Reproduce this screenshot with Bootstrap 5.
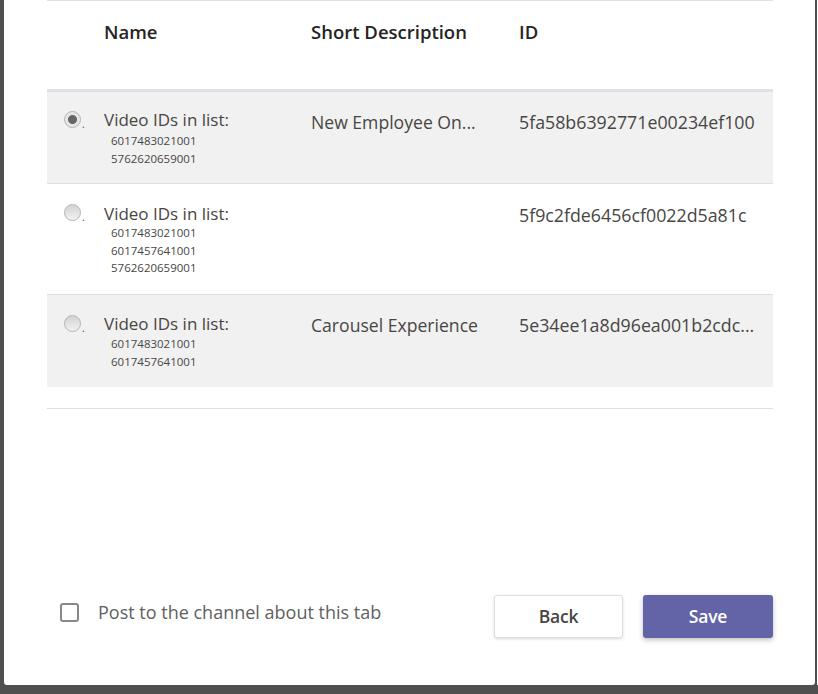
<!DOCTYPE html>
<html lang="en">
<head>
  <meta charset="UTF-8">
  <title>Video list settings</title>
  <link href="https://cdn.jsdelivr.net/npm/bootstrap@5.3.0/dist/css/bootstrap.min.css" rel="stylesheet">
  <style>
    html, body { height: 694px; overflow: hidden; }
    body { background: #4f4f4f; font-family: "Open Sans", "Liberation Sans", sans-serif; color: #484644; }
    .shell { height: 685px; padding-left: 4px; }
    .panel-main { width: 811px; background: #fff; border-radius: 0 0 3px 3px; padding: 0 42px 47px 43px; }
    .edge-strip { width: 1px; margin-left: 2px; background: #fff; }
    .video-table { table-layout: fixed; width: 726px; margin: 0; color: #484644; border-top: 1px solid #dee2e6; }
    .video-table th { height: 90px; padding: 17px 12px 0; font-size: 18.5px; font-weight: 600; line-height: 28px; color: #252423; vertical-align: top; border-bottom: 3px solid #dee2e6; }
    .video-table td { padding: 18px 12px 0; font-size: 17.6px; line-height: 24px; vertical-align: top; border-bottom: 1px solid #e1dfdd; white-space: nowrap; overflow: hidden; text-overflow: ellipsis; background: #fff; }
    .video-table tr.shade td { background: #f1f1f1; }
    .video-table td.id-cell { font-size: 17.8px; }
    .video-table tr.row-b td.id-cell { padding-top: 19px; }
    .video-table td.name-cell { padding-top: 16px; font-size: 17px; }
    .video-table tr.row-b td.name-cell { padding-top: 18px; }
    .video-table tr.row-c td.name-cell { padding-top: 17px; }
    .row-b .video-list { margin-top: -2px; }
    .row-c .video-list { margin-top: -1px; }
    .video-table td.pick-cell { padding: 19px 0 0 17px; line-height: 1; overflow: visible; }
    .video-table tr.row-b td.pick-cell, .video-table tr.row-c td.pick-cell { padding-top: 20px; }
    .row-a { height: 93px; }
    .row-b { height: 111px; }
    .row-c { height: 92px; }
    .video-table tr.row-c td { border-bottom: 0; }
    .pick-radio { appearance: none; display: inline-block; width: 17px; height: 17px; margin: 0; border-radius: 50%; border: 1px solid #b5b5b5; background: linear-gradient(#d2d2d2, #f2f2f2); vertical-align: top; }
    .pick-radio:checked { background: radial-gradient(circle, #666 0 4px, #e6e6e6 5px); }
    .pick-dot { display: inline-block; font-size: 10px; line-height: 1; margin: 8px 0 0 1px; vertical-align: top; }
    .video-list { padding-left: 7px; font-size: 11.5px; line-height: 17.6px; }
    .table-end { height: 22px; border-bottom: 1px solid #e1dfdd; width: 726px; }
    .post-wrap { margin-bottom: 9px; }
    .post-check { width: 19px; height: 19px; margin: 0 0 0 13px; border: 2px solid #8a8886; border-radius: 3px; background: #fff; appearance: none; }
    .post-label { margin-left: 19px; font-size: 18px; color: #616161; }
    .btn-back, .btn-save { height: 43px; padding: 0; font-size: 17.5px; font-weight: 600; border-radius: 3px; letter-spacing: -.2px; }
    .btn-back { width: 129px; background: #fff; color: #484644; border: 1px solid #e1dfdd; box-shadow: 0 1px 3px rgba(0,0,0,.15); }
    .btn-save { width: 130px; background: #6264a7; color: #fff; border: 0; box-shadow: 0 2px 5px rgba(0,0,0,.25); margin-left: 20px; }
  </style>
</head>
<body>
  <div class="shell d-flex">
    <div class="panel-main d-flex flex-column">
      <table class="table video-table">
        <colgroup>
          <col style="width: 45px">
          <col style="width: 207px">
          <col style="width: 208px">
          <col style="width: 266px">
        </colgroup>
        <thead>
          <tr>
            <th></th>
            <th>Name</th>
            <th>Short Description</th>
            <th>ID</th>
          </tr>
        </thead>
        <tbody>
          <tr class="row-a shade">
            <td class="pick-cell"><input class="pick-radio" type="radio" name="videoList" checked><span class="pick-dot">.</span></td>
            <td class="name-cell">Video IDs in list:
              <div class="video-list">6017483021001<br>5762620659001</div>
            </td>
            <td>New Employee On...</td>
            <td class="id-cell">5fa58b6392771e00234ef100</td>
          </tr>
          <tr class="row-b">
            <td class="pick-cell"><input class="pick-radio" type="radio" name="videoList"><span class="pick-dot">.</span></td>
            <td class="name-cell">Video IDs in list:
              <div class="video-list">6017483021001<br>6017457641001<br>5762620659001</div>
            </td>
            <td></td>
            <td class="id-cell">5f9c2fde6456cf0022d5a81c</td>
          </tr>
          <tr class="row-c shade">
            <td class="pick-cell"><input class="pick-radio" type="radio" name="videoList"><span class="pick-dot">.</span></td>
            <td class="name-cell">Video IDs in list:
              <div class="video-list">6017483021001<br>6017457641001</div>
            </td>
            <td>Carousel Experience</td>
            <td class="id-cell">5e34ee1a8d96ea001b2cdc...</td>
          </tr>
        </tbody>
      </table>
      <div class="table-end"></div>
      <div class="d-flex align-items-center mt-auto">
        <div class="post-wrap d-flex align-items-center">
          <input class="post-check" type="checkbox" id="postChannel">
          <label class="post-label" for="postChannel">Post to the channel about this tab</label>
        </div>
        <div class="ms-auto d-flex align-items-center">
          <button type="button" class="btn btn-back">Back</button>
          <button type="button" class="btn btn-save">Save</button>
        </div>
      </div>
    </div>
    <div class="edge-strip"></div>
  </div>
  <script src="https://cdn.jsdelivr.net/npm/bootstrap@5.3.0/dist/js/bootstrap.bundle.min.js"></script>
</body>
</html>
